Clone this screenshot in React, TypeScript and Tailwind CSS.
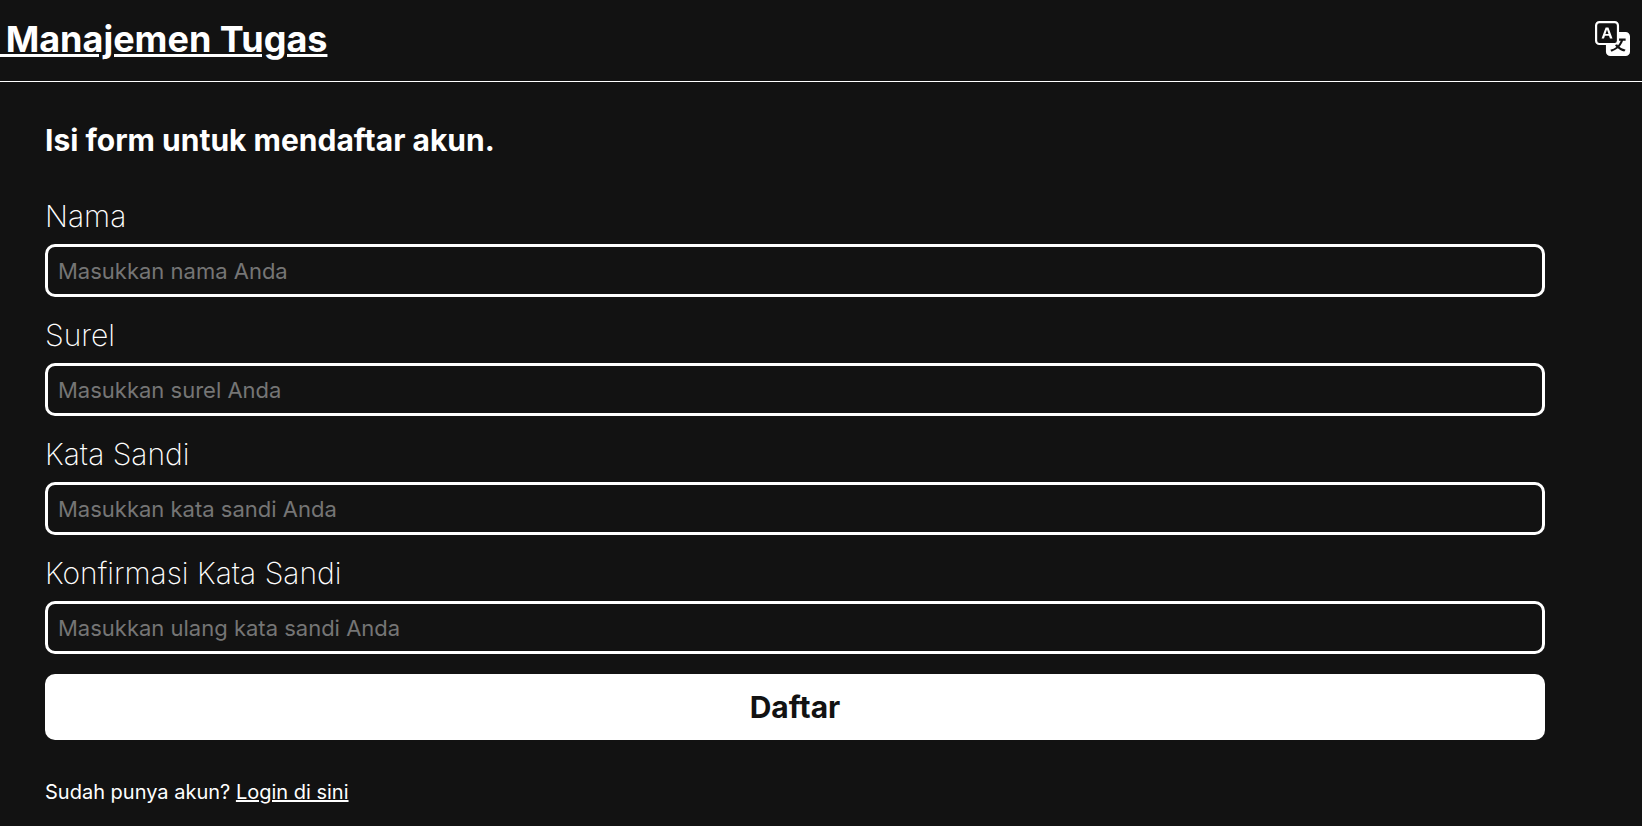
import React from "react";
import { BsTranslate } from "react-icons/bs";

const fields = [
  { id: "name", label: "Nama", type: "text", placeholder: "Masukkan nama Anda" },
  { id: "email", label: "Surel", type: "email", placeholder: "Masukkan surel Anda" },
  { id: "password", label: "Kata Sandi", type: "password", placeholder: "Masukkan kata sandi Anda" },
  { id: "confirm", label: "Konfirmasi Kata Sandi", type: "password", placeholder: "Masukkan ulang kata sandi Anda" },
];

export default function App() {
  return (
    <div className="min-h-screen bg-[#121212] font-['Inter',sans-serif] text-white">
      <header className="flex items-end justify-between border-b border-white pt-[19px] pr-3 pb-[22px]">
        <h1 className="text-4xl font-bold">
          <a href="#" className="whitespace-pre underline">{"\u2009Manajemen Tugas"}</a>
        </h1>
        <button type="button" aria-label="Ganti bahasa" className="pb-[3px]">
          <BsTranslate className="size-[35px]" />
        </button>
      </header>
      <main className="pt-10 pr-[97px] pb-4 pl-[45px]">
        <h2 className="text-3xl font-bold">Isi form untuk mendaftar akun.</h2>
        <form className="mt-10 flex flex-col gap-5">
          {fields.map((f) => (
            <div key={f.id} className="flex flex-col gap-[10px]">
              <label htmlFor={f.id} className="text-3xl font-extralight">{f.label}</label>
              <input
                id={f.id}
                type={f.type}
                placeholder={f.placeholder}
                className="h-[53px] rounded-[10px] border-3 border-white bg-transparent px-[10px] text-[22px] placeholder:text-[#757575]"
              />
            </div>
          ))}
          <button type="button" className="h-[66px] rounded-[10px] bg-white text-3xl font-bold text-[#121212]">Daftar</button>
        </form>
        <p className="mt-[38px] text-xl">
          Sudah punya akun? <a href="#" className="underline">Login di sini</a>
        </p>
      </main>
    </div>
  );
}
